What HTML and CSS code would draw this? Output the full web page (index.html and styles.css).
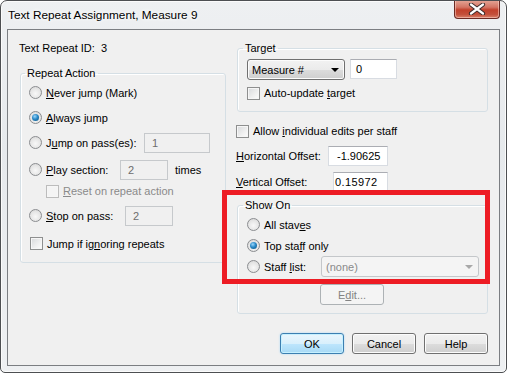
FILE: index.html
```html
<!DOCTYPE html>
<html lang="en">
<head>
    <meta charset="UTF-8">
    <title>Text Repeat Assignment, Measure 9</title>
    <link rel="stylesheet" href="styles.css">
</head>
<body>

<div class="window">
    <!-- Title bar -->
    <div class="titlebar">
        <span class="title">Text Repeat Assignment, Measure 9</span>
        <div class="close-btn">
            <svg width="18" height="12" viewBox="0 0 18 12">
                <path d="M3 1.5 L15 10.5 M15 1.5 L3 10.5" stroke="#3b2a2a" stroke-width="4.2" stroke-linecap="round"/>
                <path d="M3 1.5 L15 10.5 M15 1.5 L3 10.5" stroke="#fff" stroke-width="2.2" stroke-linecap="round"/>
            </svg>
        </div>
    </div>

    <div class="client">
        <div class="columns">
            <!-- Left column -->
            <div class="col-left">
                <div class="id-row">Text Repeat ID:&nbsp;&nbsp;3</div>

                <fieldset class="group group-action">
                    <legend>Repeat Action</legend>
                    <div class="opt">
                        <span class="radio"></span>
                        <span><u>N</u>ever jump (Mark)</span>
                    </div>
                    <div class="opt">
                        <span class="radio checked"></span>
                        <span><u>A</u>lways jump</span>
                    </div>
                    <div class="opt">
                        <span class="radio"></span>
                        <span class="lbl lbl-jump">J<u>u</u>mp on pass(es):</span>
                        <span class="field disabled w-jump">1</span>
                    </div>
                    <div class="opt opt-play">
                        <span class="radio"></span>
                        <span class="lbl lbl-play"><u>P</u>lay section:</span>
                        <span class="field disabled w-small">2</span>
                        <span class="times">times</span>
                    </div>
                    <div class="opt opt-sub">
                        <span class="check disabled"></span>
                        <span class="muted"><u>R</u>eset on repeat action</span>
                    </div>
                    <div class="opt opt-stop">
                        <span class="radio"></span>
                        <span class="lbl lbl-stop"><u>S</u>top on pass:</span>
                        <span class="field disabled w-small">2</span>
                    </div>
                    <div class="opt opt-last">
                        <span class="check"></span>
                        <span>Jump if ig<u>n</u>oring repeats</span>
                    </div>
                </fieldset>
            </div>

            <!-- Right column -->
            <div class="col-right">
                <fieldset class="group group-target">
                    <legend>Target</legend>
                    <div class="target-row">
                        <div class="combo">
                            <span>Measure #</span>
                            <span class="arrow"></span>
                        </div>
                        <span class="field w-target">0</span>
                    </div>
                    <div class="check-row">
                        <span class="check"></span>
                        <span>Auto-update <u>t</u>arget</span>
                    </div>
                </fieldset>

                <div class="check-row allow-row">
                    <span class="check"></span>
                    <span>Allow <u>i</u>ndividual edits per staff</span>
                </div>

                <div class="offset-row">
                    <span class="lbl lbl-hor"><u>H</u>orizontal Offset:</span>
                    <span class="field w-hor">-1.90625</span>
                </div>
                <div class="offset-row offset-vert">
                    <span class="lbl lbl-vert"><u>V</u>ertical Offset:</span>
                    <span class="field w-vert">0.15972</span>
                </div>

                <fieldset class="group group-show">
                    <legend>Show On</legend>
                    <div class="show-opt">
                        <span class="radio"></span>
                        <span>All stav<u>e</u>s</span>
                    </div>
                    <div class="show-opt">
                        <span class="radio checked"></span>
                        <span>Top sta<u>f</u>f only</span>
                    </div>
                    <div class="show-opt">
                        <span class="radio"></span>
                        <span class="lbl lbl-staff">Staff <u>l</u>ist:</span>
                        <div class="combo combo-disabled">
                            <span>(none)</span>
                            <span class="arrow"></span>
                        </div>
                    </div>
                    <div class="edit-row">
                        <span class="btn btn-disabled">E<u>d</u>it...</span>
                    </div>
                </fieldset>
            </div>
        </div>

        <div class="buttons">
            <span class="btn btn-default">OK</span>
            <span class="btn">Cancel</span>
            <span class="btn">Help</span>
        </div>

        <!-- red annotation frame drawn over the dialog -->
        <div class="highlight"></div>
    </div>
</div>

</body>
</html>
```

FILE: styles.css
```css
/* Page + window frame */
body {
    margin: 0;
    font-family: "Liberation Sans", Arial, sans-serif;
    font-size: 11px;
    color: #000;
    background: #fff;
}

.window {
    width: 507px;
    height: 373px;
    box-sizing: border-box;
    border: 1px solid #4d4f52;
    border-radius: 7px 7px 5px 5px;
    background: linear-gradient(180deg, #eef0f2 0%, #e6e9ec 40%, #eef0f2 100%);
    box-shadow: inset 0 0 0 1px #fbfbfb;
    overflow: hidden;
}

/* Title bar */
.titlebar {
    height: 28px;
    display: flex;
    justify-content: space-between;
    align-items: flex-start;
    padding: 0 6px 0 7px;
}

.title {
    font-size: 11.8px;
    margin-top: 7px;
    color: #000;
    text-shadow: 0 0 6px #fff, 0 0 4px #fff;
}

.close-btn {
    width: 46px;
    height: 19px;
    box-sizing: border-box;
    margin-top: -1px;
    border: 1px solid #6b2a24;
    border-top: none;
    border-radius: 0 0 4px 4px;
    background: linear-gradient(180deg, #e6a899 0%, #d47564 40%, #c2412c 55%, #c3503b 80%, #d8806a 100%);
    box-shadow: inset 0 0 0 1px rgba(255, 220, 210, 0.5);
    display: flex;
    align-items: center;
    justify-content: center;
}

/* Client area */
.client {
    position: relative;
    margin: 0 6px;
    height: 337px;
    box-sizing: border-box;
    border: 1px solid #7b7e82;
    background-color: #f0f0f0;
    padding: 11px 10px 0 12px;
}

.columns {
    display: grid;
    grid-template-columns: 206px 252px;
    column-gap: 10px;
    height: 275px;
}

.id-row {
    height: 14px;
    line-height: 14px;
    margin-left: -1px;
}

/* Group boxes */
.group {
    margin: 0;
    min-inline-size: 0;
    border: 1px solid #d5dfe5;
    border-radius: 3px;
    box-shadow: inset 1px 1px 0 #fff;
}

.group legend {
    line-height: 14px;
    padding: 0 2px;
    margin-left: -4px;
}

.group-action {
    margin-top: 11px;
    padding: 0 6px 6px 8px;
}

.opt {
    height: 25px;
    display: flex;
    align-items: center;
}

.opt-play { margin-top: 2px; height: 25px; }
.opt-sub { height: 18px; padding-left: 17px; }
.opt-stop { margin-top: 3px; }
.opt-last { margin-top: 3px; padding-left: 1px; }

.lbl { display: inline-block; flex: none; }
.lbl-jump { width: 98px; }
.lbl-play { width: 74px; }
.lbl-stop { width: 79px; }
.lbl-hor { width: 92px; }
.lbl-vert { width: 97px; }
.lbl-staff { width: 57px; }

.times { margin-left: 7px; }

.muted { color: #8a8a8a; }

/* Radios and checkboxes */
.radio {
    flex: none;
    width: 13px;
    height: 13px;
    box-sizing: border-box;
    border-radius: 50%;
    border: 1px solid #8b8d90;
    background: radial-gradient(circle at 50% 60%, #f8f8f8 0%, #e6e6e6 55%, #d2d2d2 100%);
    margin-right: 4px;
    position: relative;
}

.radio.checked::after {
    content: "";
    position: absolute;
    left: 2px;
    top: 2px;
    width: 7px;
    height: 7px;
    border-radius: 50%;
    background: radial-gradient(circle at 40% 35%, #9ad6fb 0%, #2a89c7 45%, #0a4f7d 100%);
}

.check {
    flex: none;
    width: 13px;
    height: 13px;
    box-sizing: border-box;
    border: 1px solid #8e8f8f;
    background: linear-gradient(135deg, #d7d9db 0%, #f0f0f0 60%, #fdfdfd 100%);
    box-shadow: inset 0 0 0 1px #f6f6f6;
    margin-right: 4px;
}

.check.disabled {
    border-color: #bcbcbc;
    background: #f4f4f4;
}

/* Edit fields */
.field {
    flex: none;
    height: 20px;
    line-height: 18px;
    box-sizing: border-box;
    border: 1px solid #d8dce2;
    border-top-color: #abadb3;
    background: #fff;
    padding-left: 5px;
}

.field.disabled {
    background: #f0f0f0;
    border-color: #c6c9cc;
    color: #6d6d6d;
    padding-left: 7px;
}

.w-jump { width: 66px; }
.w-small { width: 48px; }
.w-target { width: 47px; padding-left: 5px; }
.w-hor { width: 60px; padding-left: 8px; }
.w-vert { width: 55px; padding-left: 1px; letter-spacing: 0.4px; }

/* Combo boxes */
.combo {
    flex: none;
    width: 98px;
    height: 21px;
    box-sizing: border-box;
    border: 1px solid #707070;
    border-radius: 3px;
    background: linear-gradient(180deg, #f2f2f2 0%, #ebebeb 50%, #dddddd 51%, #cfcfcf 100%);
    box-shadow: inset 0 0 0 1px #fcfcfc;
    display: flex;
    align-items: center;
    justify-content: space-between;
    padding: 0 5px 0 4px;
}

.arrow {
    width: 0;
    height: 0;
    border-left: 4px solid transparent;
    border-right: 4px solid transparent;
    border-top: 4px solid #000;
}

.combo-disabled {
    width: 158px;
    border-color: #c4c7ca;
    background: #f4f4f4;
    box-shadow: none;
    color: #8a8a8a;
}

.combo-disabled .arrow {
    border-top-color: #a8a8a8;
}

/* Right column */
.group-target {
    margin-left: 1px;
    padding: 4px 6px 11px 9px;
}

.target-row {
    display: flex;
    align-items: flex-start;
    gap: 5px;
    height: 20px;
}

.check-row {
    display: flex;
    align-items: center;
    height: 14px;
    margin-top: 7px;
}

.allow-row { margin-top: 12px; }

.offset-row {
    display: flex;
    align-items: center;
    height: 20px;
    margin-top: 8px;
}

.offset-vert { margin-top: 6px; }

.group-show {
    margin: 6px 0 0 1px;
    padding: 2px 6px 8px 9px;
}

.show-opt {
    height: 21px;
    display: flex;
    align-items: center;
}

.edit-row {
    margin-top: 7px;
    padding-left: 73px;
}

/* Push buttons */
.btn {
    display: inline-flex;
    align-items: center;
    justify-content: center;
    width: 64px;
    height: 21px;
    box-sizing: border-box;
    border: 1px solid #707070;
    border-radius: 3px;
    background: linear-gradient(180deg, #f2f2f2 0%, #ebebeb 50%, #dddddd 51%, #cfcfcf 100%);
    box-shadow: inset 0 0 0 1px #fcfcfc;
}

.btn-default {
    border-color: #3c7fb1;
    background: linear-gradient(180deg, #eaf6fd 0%, #d9f0fc 50%, #bee6fd 51%, #a7d9f5 100%);
    box-shadow: inset 0 0 0 1px #c6f0ff, 0 0 2px #9fd5f5;
}

.btn-disabled {
    border-color: #adb2b5;
    background: #f4f4f4;
    box-shadow: none;
    color: #838383;
}

.buttons {
    display: flex;
    justify-content: flex-end;
    gap: 8px;
    margin-top: 17px;
    padding-right: 1px;
}

/* Red annotation frame */
.highlight {
    position: absolute;
    left: 214px;
    top: 160px;
    width: 268px;
    height: 94px;
    box-sizing: border-box;
    border: 5px solid #ed1c24;
}
```
